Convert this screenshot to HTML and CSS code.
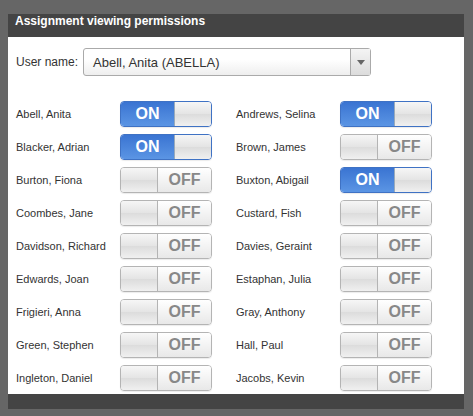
FILE: index.html
```html
<!DOCTYPE html>
<html>
<head>
<meta charset="utf-8">
<link rel="stylesheet" href="styles.css">
</head>
<body>
<div class="panel">
  <div class="panel-head">Assignment viewing permissions</div>
  <div class="panel-body">
    <div class="user-row">
      <span class="user-label">User name:</span>
      <div class="select">
        <span class="select-text">Abell, Anita (ABELLA)</span>
        <span class="select-btn"><span class="arrow"></span></span>
      </div>
    </div>
    <div class="list">
      <div class="item"><span class="name">Abell, Anita</span><div class="toggle on"><span class="state">ON</span><span class="knob"></span></div></div>
      <div class="item"><span class="name">Andrews, Selina</span><div class="toggle on"><span class="state">ON</span><span class="knob"></span></div></div>
      <div class="item"><span class="name">Blacker, Adrian</span><div class="toggle on"><span class="state">ON</span><span class="knob"></span></div></div>
      <div class="item"><span class="name">Brown, James</span><div class="toggle off"><span class="knob"></span><span class="state">OFF</span></div></div>
      <div class="item"><span class="name">Burton, Fiona</span><div class="toggle off"><span class="knob"></span><span class="state">OFF</span></div></div>
      <div class="item"><span class="name">Buxton, Abigail</span><div class="toggle on"><span class="state">ON</span><span class="knob"></span></div></div>
      <div class="item"><span class="name">Coombes, Jane</span><div class="toggle off"><span class="knob"></span><span class="state">OFF</span></div></div>
      <div class="item"><span class="name">Custard, Fish</span><div class="toggle off"><span class="knob"></span><span class="state">OFF</span></div></div>
      <div class="item"><span class="name">Davidson, Richard</span><div class="toggle off"><span class="knob"></span><span class="state">OFF</span></div></div>
      <div class="item"><span class="name">Davies, Geraint</span><div class="toggle off"><span class="knob"></span><span class="state">OFF</span></div></div>
      <div class="item"><span class="name">Edwards, Joan</span><div class="toggle off"><span class="knob"></span><span class="state">OFF</span></div></div>
      <div class="item"><span class="name">Estaphan, Julia</span><div class="toggle off"><span class="knob"></span><span class="state">OFF</span></div></div>
      <div class="item"><span class="name">Frigieri, Anna</span><div class="toggle off"><span class="knob"></span><span class="state">OFF</span></div></div>
      <div class="item"><span class="name">Gray, Anthony</span><div class="toggle off"><span class="knob"></span><span class="state">OFF</span></div></div>
      <div class="item"><span class="name">Green, Stephen</span><div class="toggle off"><span class="knob"></span><span class="state">OFF</span></div></div>
      <div class="item"><span class="name">Hall, Paul</span><div class="toggle off"><span class="knob"></span><span class="state">OFF</span></div></div>
      <div class="item"><span class="name">Ingleton, Daniel</span><div class="toggle off"><span class="knob"></span><span class="state">OFF</span></div></div>
      <div class="item"><span class="name">Jacobs, Kevin</span><div class="toggle off"><span class="knob"></span><span class="state">OFF</span></div></div>
    </div>
  </div>
  <div class="panel-foot"></div>
</div>
</body>
</html>
```
FILE: styles.css
```css
html, body {
  margin: 0;
  background: #666666;
}
body {
  padding: 14px 9px 0 8px;
  font-family: "Liberation Sans", Arial, sans-serif;
  color: #333;
}
.panel {
  width: 456px;
}
.panel-head {
  height: 23px;
  background: #444444;
  color: #fff;
  font-weight: bold;
  font-size: 12px;
  line-height: 15px;
  padding: 0 0 0 7px;
  box-sizing: border-box;
}
.panel-body {
  background: #fff;
  padding: 11px 8px 3px 8px;
}
.panel-foot {
  height: 15px;
  background: #444444;
}
.user-row {
  display: flex;
  align-items: center;
  height: 28px;
}
.user-label {
  font-size: 12px;
  width: 67px;
  color: #333;
}
.select {
  width: 288px;
  height: 28px;
  box-sizing: border-box;
  border: 1px solid #aaaaaa;
  border-radius: 3px;
  background: linear-gradient(#ffffff 40%, #eeeeee);
  display: flex;
  align-items: center;
}
.select-text {
  flex: 1;
  font-size: 13px;
  color: #333;
  padding-left: 9px;
}
.select-btn {
  width: 19px;
  height: 100%;
  border-left: 1px solid #aaaaaa;
  background: linear-gradient(#f4f4f4, #dcdcdc);
  display: flex;
  align-items: center;
  justify-content: center;
}
.arrow {
  width: 0;
  height: 0;
  border-left: 4px solid transparent;
  border-right: 4px solid transparent;
  border-top: 5px solid #666;
}
.list {
  margin-top: 25px;
  display: grid;
  grid-template-columns: 196px 196px;
  column-gap: 24px;
  row-gap: 7px;
}
.item {
  display: flex;
  align-items: center;
  height: 26px;
}
.name {
  width: 104px;
  font-size: 11px;
  color: #333;
}
.toggle {
  width: 92px;
  height: 26px;
  box-sizing: border-box;
  border: 1px solid #b4b4b4;
  border-radius: 4px;
  overflow: hidden;
  display: flex;
  box-shadow: 0 1px 1px rgba(0, 0, 0, 0.08);
}
.toggle .state {
  width: 53px;
  display: flex;
  align-items: center;
  justify-content: center;
  font-weight: bold;
  font-size: 16px;
}
.toggle .knob {
  flex: 1;
  background: linear-gradient(#f6f6f6, #e4e4e4 50%, #dcdcdc 51%, #f0f0f0);
}
.toggle.on {
  border-color: #3f72c4;
}
.toggle.on .state {
  background: linear-gradient(#3a74d2, #5b95e4);
  color: #fff;
}
.toggle.on .knob {
  border-left: 1px solid #9ab;
}
.toggle.off .state {
  background: linear-gradient(#ffffff, #e8e8e8);
  color: #888;
  border-left: 1px solid #b4b4b4;
}
```
